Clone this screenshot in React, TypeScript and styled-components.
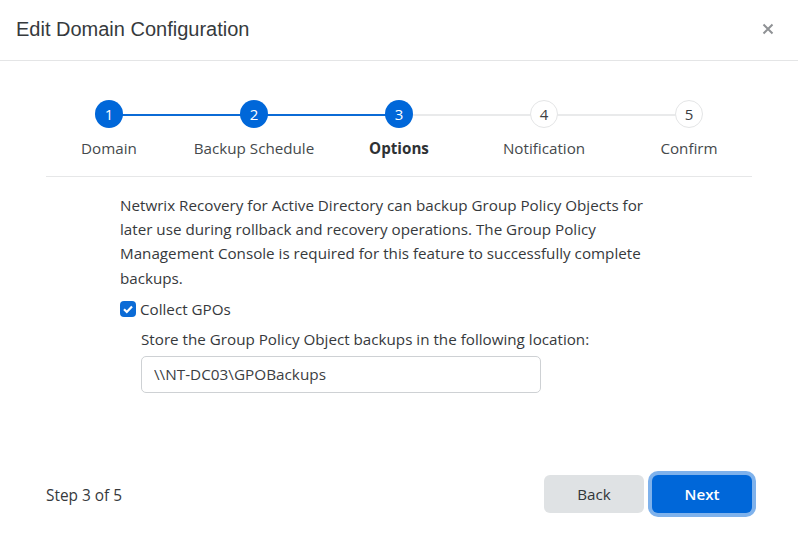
import React from "react";
import styled, { createGlobalStyle } from "styled-components";

const Global = createGlobalStyle`
  html, body { margin: 0; padding: 0; background: #fff; }
  body { font-family: "Open Sans", "Noto Sans", "Liberation Sans", sans-serif; color: #333; }
`;

const Dialog = styled.div`
  width: 798px;
  height: 548px;
  display: flex;
  flex-direction: column;
  background: #fff;
  overflow: hidden;
`;

const Header = styled.header`
  height: 61px;
  box-sizing: border-box;
  border-bottom: 1px solid #e4e5e6;
  padding: 0 24px 3px 16px;
  display: flex;
  align-items: center;
  justify-content: space-between;
`;

const Title = styled.h1`
  margin: 0;
  font: 400 20px/28px "Liberation Sans", Arial, sans-serif;
  color: #363a3d;
`;

const Close = styled.button`
  border: 0;
  background: none;
  padding: 0;
  width: 12px;
  height: 12px;
  display: flex;
  color: #8f9295;
`;

const Body = styled.main`
  flex: 1;
  padding: 0 46px;
  display: flex;
  flex-direction: column;
`;

const Stepper = styled.ol`
  list-style: none;
  margin: 39px -9.5px 0;
  padding: 0 0 18px;
  display: grid;
  grid-template-columns: repeat(5, 145px);
  position: relative;
`;

const Rule = styled.div`
  height: 1px;
  background: #e6e7e8;
`;

const Step = styled.li<{ $lineDone?: boolean; $last?: boolean }>`
  display: flex;
  flex-direction: column;
  align-items: center;
  position: relative;
  &::after {
    content: "";
    display: ${(p) => (p.$last ? "none" : "block")};
    position: absolute;
    top: 14px;
    left: 50%;
    width: 100%;
    height: 2px;
    background: ${(p) => (p.$lineDone ? "#0b6bd6" : "#e9eaeb")};
  }
`;

const Circle = styled.span<{ $active?: boolean }>`
  position: relative;
  z-index: 1;
  width: 28px;
  height: 28px;
  box-sizing: border-box;
  border-radius: 50%;
  display: flex;
  align-items: center;
  justify-content: center;
  font-size: 15px;
  background: ${(p) => (p.$active ? "#0067d9" : "#fff")};
  color: ${(p) => (p.$active ? "#fff" : "#3c4043")};
  border: ${(p) => (p.$active ? "0" : "1px solid #e4e5e6")};
`;

const StepLabel = styled.span<{ $current?: boolean }>`
  margin-top: 10px;
  font-size: 15.2px;
  line-height: 20px;
  font-weight: ${(p) => (p.$current ? 700 : 400)};
  color: ${(p) => (p.$current ? "#2e3134" : "#45494c")};
`;

const Content = styled.section`
  padding: 16px 0 0 74px;
  width: 530px;
`;

const Paragraph = styled.p`
  margin: 0;
  font-size: 15.2px;
  line-height: 24.2px;
  color: #36393c;
`;

const CheckRow = styled.label`
  display: flex;
  align-items: center;
  gap: 4px;
  margin-top: 7.4px;
  height: 24px;
  font-size: 15.2px;
  color: #36393c;
`;

const Box = styled.span`
  width: 16px;
  height: 16px;
  border-radius: 4px;
  background: #0b6bd6;
  display: flex;
  align-items: center;
  justify-content: center;
`;

const Indented = styled.div`
  margin: 6px 0 0 21px;
`;

const FieldLabel = styled.div`
  font-size: 15.2px;
  line-height: 24px;
  color: #36393c;
  white-space: nowrap;
`;

const Input = styled.input`
  display: block;
  margin-top: 5px;
  width: 400px;
  height: 37px;
  box-sizing: border-box;
  border: 1px solid #ced1d4;
  border-radius: 5px;
  padding: 0 12px 2px;
  font: inherit;
  font-size: 15.3px;
  color: #3c4043;
  background: #fff;
  outline: none;
`;

const Footer = styled.footer`
  margin-top: auto;
  margin-bottom: 35px;
  display: flex;
  align-items: center;
  justify-content: space-between;
`;

const StepCount = styled.span`
  font-size: 15.4px;
  color: #36393c;
  padding-top: 2px;
`;

const Actions = styled.div`
  display: flex;
  gap: 8px;
`;

const Button = styled.button<{ $primary?: boolean }>`
  width: 100px;
  height: 38px;
  border: 0;
  border-radius: 6px;
  font-family: inherit;
  font-size: 15.2px;
  font-weight: ${(p) => (p.$primary ? 600 : 400)};
  background: ${(p) => (p.$primary ? "#0067d9" : "#dfe2e4")};
  color: ${(p) => (p.$primary ? "#fff" : "#33373a")};
  box-shadow: ${(p) => (p.$primary ? "0 0 0 4px #7fb2ec" : "none")};
`;

const steps = ["Domain", "Backup Schedule", "Options", "Notification", "Confirm"];
const current = 2;

export default function App() {
  return (
    <Dialog>
      <Global />
      <Header>
        <Title>Edit Domain Configuration</Title>
        <Close aria-label="Close">
          <svg width="12" height="12" viewBox="0 0 12 12">
            <path d="M1.5 1.5l9 9M10.5 1.5l-9 9" stroke="currentColor" strokeWidth="2" fill="none" />
          </svg>
        </Close>
      </Header>
      <Body>
        <Stepper>
          {steps.map((label, i) => (
            <Step key={label} $lineDone={i < current} $last={i === steps.length - 1}>
              <Circle $active={i <= current}>{i + 1}</Circle>
              <StepLabel $current={i === current}>{label}</StepLabel>
            </Step>
          ))}
        </Stepper>
        <Rule />
        <Content>
          <Paragraph>
            Netwrix Recovery for Active Directory can backup Group Policy Objects for later use during rollback and
            recovery operations. The Group Policy Management Console is required for this feature to successfully
            complete backups.
          </Paragraph>
          <CheckRow>
            <Box>
              <svg width="12" height="12" viewBox="0 0 12 12">
                <path d="M2 6.2l2.8 2.8L10 3.4" stroke="#fff" strokeWidth="2.2" fill="none" />
              </svg>
            </Box>
            Collect GPOs
          </CheckRow>
          <Indented>
            <FieldLabel>Store the Group Policy Object backups in the following location:</FieldLabel>
            <Input readOnly value="\\NT-DC03\GPOBackups" />
          </Indented>
        </Content>
        <Footer>
          <StepCount>Step 3 of 5</StepCount>
          <Actions>
            <Button>Back</Button>
            <Button $primary>Next</Button>
          </Actions>
        </Footer>
      </Body>
    </Dialog>
  );
}
